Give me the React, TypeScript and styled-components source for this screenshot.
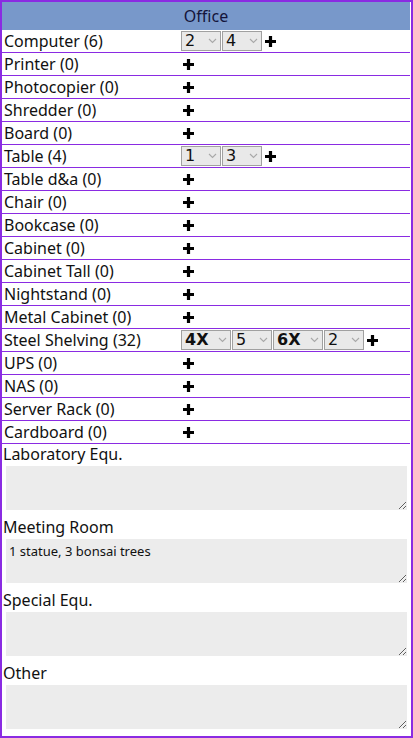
import React from "react";
import styled, {createGlobalStyle} from "styled-components";

const GlobalStyle = createGlobalStyle`
  html, body {
    margin: 0;
    padding: 0;
    background: #ffffff;
  }
  * {
    box-sizing: border-box;
  }
`;

type Item = {
  name: string;
  count: number;
  selects?: {value: string; wide?: boolean}[];
};

const items: Item[] = [
  {name: "Computer", count: 6, selects: [{value: "2"}, {value: "4"}]},
  {name: "Printer", count: 0},
  {name: "Photocopier", count: 0},
  {name: "Shredder", count: 0},
  {name: "Board", count: 0},
  {name: "Table", count: 4, selects: [{value: "1"}, {value: "3"}]},
  {name: "Table d&a", count: 0},
  {name: "Chair", count: 0},
  {name: "Bookcase", count: 0},
  {name: "Cabinet", count: 0},
  {name: "Cabinet Tall", count: 0},
  {name: "Nightstand", count: 0},
  {name: "Metal Cabinet", count: 0},
  {
    name: "Steel Shelving",
    count: 32,
    selects: [
      {value: "4X", wide: true},
      {value: "5"},
      {value: "6X", wide: true},
      {value: "2"},
    ],
  },
  {name: "UPS", count: 0},
  {name: "NAS", count: 0},
  {name: "Server Rack", count: 0},
  {name: "Cardboard", count: 0},
];

const notes = [
  {label: "Laboratory Equ.", value: ""},
  {label: "Meeting Room", value: "1 statue, 3 bonsai trees"},
  {label: "Special Equ.", value: ""},
  {label: "Other", value: ""},
];

function PlusIcon() {
  return (
    <svg width="13" height="13" viewBox="0 0 13 13">
      <path d="M6.5 1v11M1 6.5h11" stroke="#000" strokeWidth="3.2" />
    </svg>
  );
}

function Chevron() {
  return (
    <svg width="9" height="6" viewBox="0 0 9 6">
      <path d="M1 1l3.5 3.5L8 1" stroke="#a8a8a8" strokeWidth="1.1" fill="none" />
    </svg>
  );
}

function Dropdown({value, wide}: {value: string; wide?: boolean}) {
  return (
    <SelectWrap $wide={wide}>
      <Select defaultValue={value} $wide={wide}>
        <option value={value}>{value}</option>
      </Select>
      <ChevronBox>
        <Chevron />
      </ChevronBox>
    </SelectWrap>
  );
}

export default function App() {
  return (
    <>
      <GlobalStyle />
      <Frame>
        <Header>Office</Header>
        {items.map((item) => (
          <Row key={item.name}>
            <ItemName>
              {item.name} ({item.count})
            </ItemName>
            <Controls>
              {item.selects?.map((s, i) => (
                <Dropdown key={i} value={s.value} wide={s.wide} />
              ))}
              <AddButton>
                <PlusIcon />
              </AddButton>
            </Controls>
          </Row>
        ))}
        {notes.map((n) => (
          <NoteBlock key={n.label}>
            <NoteLabel>{n.label}</NoteLabel>
            <NoteArea defaultValue={n.value} />
          </NoteBlock>
        ))}
      </Frame>
    </>
  );
}

const Frame = styled.div`
  width: 413px;
  height: 738px;
  border: 2px solid #8a2be2;
  font-family: "Noto Sans", "Open Sans", sans-serif;
  color: #111;
  display: flex;
  flex-direction: column;
  overflow: hidden;
`;

const Header = styled.div`
  height: 28px;
  background: #7898ca;
  color: #14143a;
  font-size: 16px;
  display: flex;
  align-items: center;
  justify-content: center;
  margin-right: 1px;
  padding-bottom: 1px;
`;

const Row = styled.div`
  height: 23px;
  display: grid;
  grid-template-columns: 179px 1fr;
  align-items: center;
  border-bottom: 1px solid #8a2be2;
  margin-right: 1px;
`;

const ItemName = styled.div`
  padding-left: 2px;
  font-size: 16px;
  white-space: nowrap;
`;

const Controls = styled.div`
  display: flex;
  align-items: center;
  gap: 1px;
  height: 100%;
`;

const SelectWrap = styled.span<{$wide?: boolean}>`
  position: relative;
  display: inline-flex;
  width: ${(p) => (p.$wide ? "50px" : "40px")};
  height: 20px;
`;

const Select = styled.select<{$wide?: boolean}>`
  appearance: none;
  width: 100%;
  height: 100%;
  border: 1px solid #a0a0a0;
  border-radius: 0;
  background: #e9e9e9;
  font-family: "DejaVu Sans", Verdana, sans-serif;
  font-size: 16px;
  font-weight: ${(p) => (p.$wide ? 700 : 400)};
  color: #111;
  padding: 0 0 0 3px;
  line-height: 18px;
  outline: none;
`;

const ChevronBox = styled.span`
  position: absolute;
  right: 4px;
  top: 7px;
  display: flex;
  pointer-events: none;
`;

const AddButton = styled.span`
  display: inline-flex;
  align-items: center;
  padding-left: 1px;
`;

const NoteBlock = styled.div`
  display: flex;
  flex-direction: column;
  padding-bottom: 7px;
`;

const NoteLabel = styled.div`
  font-size: 16px;
  height: 21px;
  line-height: 20px;
  padding-left: 1px;
`;

const NoteArea = styled.textarea`
  margin: 1px 4px 0 4px;
  width: 401px;
  height: 44px;
  border: none;
  background: #ececec;
  font-family: "Noto Sans", "Open Sans", sans-serif;
  font-size: 13px;
  color: #111;
  padding: 3px 3px;
  resize: vertical;
`;
